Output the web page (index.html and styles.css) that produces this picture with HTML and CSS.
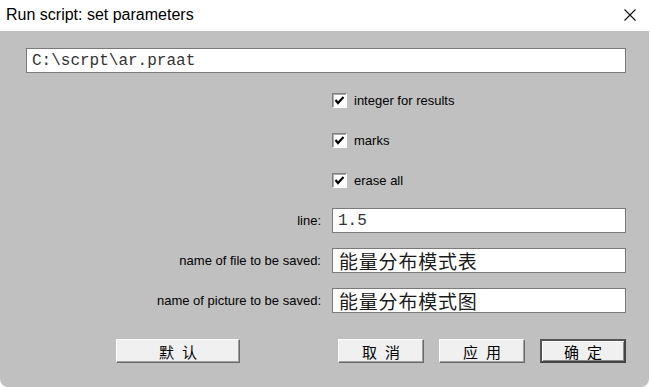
FILE: index.html
```html
<!DOCTYPE html>
<html lang="en">

<head>
    <meta charset="UTF-8">
    <meta name="viewport" content="width=device-width, initial-scale=1.0">
    <title>Run script: set parameters</title>
    <link rel="stylesheet" href="styles.css">
</head>

<body>
    <div class="window">
        <header class="titlebar">
            <span class="title">Run script: set parameters</span>
            <span class="close">
                <svg width="12" height="12" viewBox="0 0 12 12">
                    <path d="M0.5 0.5 L11.5 11.5 M11.5 0.5 L0.5 11.5" stroke="#111" stroke-width="1.1" fill="none"/>
                </svg>
            </span>
        </header>

        <form class="dialog">
            <div class="fields">
                <input class="field wide mono" type="text" value="C:\scrpt\ar.praat">

                <span></span>
                <label class="check">
                    <span class="box">
                        <svg width="11" height="11" viewBox="0 0 11 11"><path d="M1.5 5 L4 8 L9.5 2" stroke="#000" stroke-width="2.2" fill="none"/></svg>
                    </span>
                    integer for results
                </label>

                <span></span>
                <label class="check">
                    <span class="box">
                        <svg width="11" height="11" viewBox="0 0 11 11"><path d="M1.5 5 L4 8 L9.5 2" stroke="#000" stroke-width="2.2" fill="none"/></svg>
                    </span>
                    marks
                </label>

                <span></span>
                <label class="check">
                    <span class="box">
                        <svg width="11" height="11" viewBox="0 0 11 11"><path d="M1.5 5 L4 8 L9.5 2" stroke="#000" stroke-width="2.2" fill="none"/></svg>
                    </span>
                    erase all
                </label>

                <label class="name">line:</label>
                <input class="field mono" type="text" value="1.5">

                <label class="name">name of file to be saved:</label>
                <input class="field cjk" type="text" value="能量分布模式表">

                <label class="name">name of picture to be saved:</label>
                <input class="field cjk" type="text" value="能量分布模式图">
            </div>

            <div class="buttons">
                <button type="button" class="btn wide-btn">默认</button>
                <span class="spacer"></span>
                <button type="button" class="btn">取消</button>
                <button type="button" class="btn">应用</button>
                <button type="button" class="btn default">确定</button>
            </div>
        </form>
    </div>
</body>

</html>
```

FILE: styles.css
```css
body {
    margin: 0;
    padding: 0;
    background: #ffffff;
    font-family: 'Liberation Sans', Arial, sans-serif;
}

.window {
    width: 649px;
    height: 387px;
    background: #c0c0c0;
    border-radius: 0 0 8px 8px;
    overflow: hidden;
    display: flex;
    flex-direction: column;
}

.titlebar {
    height: 31px;
    background: #ffffff;
    display: flex;
    align-items: center;
    justify-content: space-between;
    padding: 0 13px 0 6px;
}

.title {
    font-size: 16px;
    color: #000;
    padding-bottom: 1px;
}

.close {
    display: flex;
    padding-bottom: 1px;
}

.dialog {
    padding: 17px 23px 0 26px;
    margin: 0;
}

/* 表單欄位 */
.fields {
    display: grid;
    grid-template-columns: 295px 1fr;
    grid-auto-rows: 25px;
    column-gap: 11px;
    row-gap: 15px;
    align-items: center;
}

.field {
    box-sizing: border-box;
    height: 25px;
    margin: 0;
    padding: 0 5px;
    border: 1px solid #7a7a7a;
    background: #ffffff;
    color: #111;
    outline: none;
}

.field.wide {
    grid-column: 1 / 3;
}

.mono {
    font-family: 'Liberation Mono', 'Courier New', monospace;
    font-size: 16px;
    color: #333;
}

.cjk {
    font-family: 'Noto Sans CJK SC', sans-serif;
    font-size: 19px;
    padding-left: 6px;
    letter-spacing: 0.8px;
    color: #1a1a1a;
}

.name {
    text-align: right;
    font-size: 13px;
    color: #000;
}

.check {
    display: flex;
    align-items: center;
    gap: 7px;
    font-size: 13px;
    color: #000;
}

.box {
    box-sizing: border-box;
    width: 15px;
    height: 15px;
    background: #ffffff;
    border: 1px solid;
    border-color: #808080 #ffffff #ffffff #808080;
    box-shadow: inset 1px 1px 0 #a8a8a8;
    display: flex;
    align-items: center;
    justify-content: center;
}

/* 按鈕列 */
.buttons {
    display: flex;
    gap: 15px;
    margin-top: 26px;
    padding-left: 90px;
}

.spacer {
    flex: 1;
}

.btn {
    box-sizing: border-box;
    width: 86px;
    height: 24px;
    margin: 0;
    padding: 0 0 0 8px;
    background: #f0f0f0;
    border: 1px solid;
    border-color: #ffffff #6a6a6a #6a6a6a #ffffff;
    box-shadow: inset -1px -1px 0 #a0a0a0;
    font-family: 'Noto Sans CJK SC', sans-serif;
    font-size: 15px;
    letter-spacing: 8px;
    color: #000;
}

.btn.wide-btn {
    width: 124px;
}

.btn.default {
    border: 2px solid #555;
    border-right-color: #444;
    border-bottom-color: #444;
    box-shadow: inset 1px 1px 0 #ffffff, inset -1px -1px 0 #8a8a8a;
}
```
